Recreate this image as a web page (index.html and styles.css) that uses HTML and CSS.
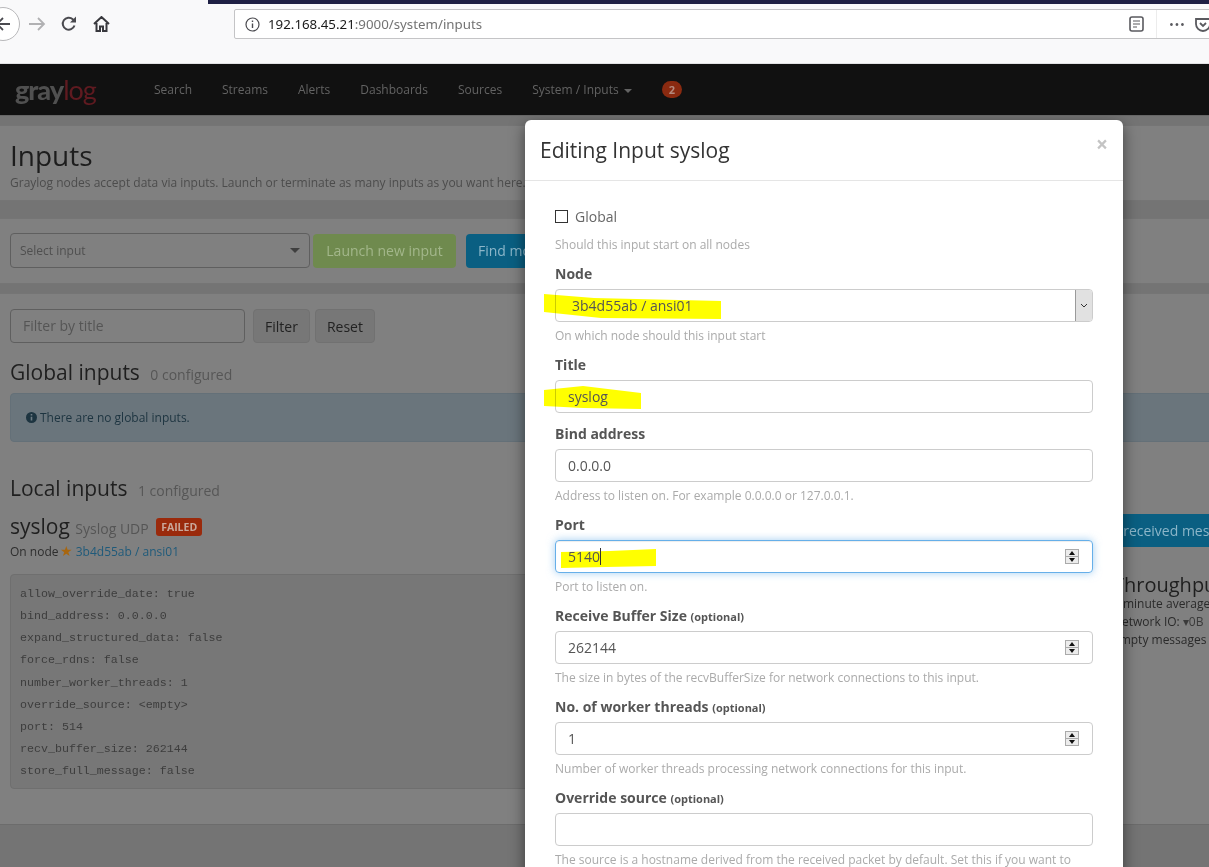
FILE: index.html
```html
<!DOCTYPE html>
<html lang="en">
<head>
    <meta charset="UTF-8">
    <meta name="viewport" content="width=device-width, initial-scale=1.0">
    <title>Inputs - Graylog</title>
    <link rel="stylesheet" href="styles.css">
</head>
<body>

    <!-- Browser toolbar -->
    <div class="browser-bar">
        <div class="tab-strip"></div>
        <div class="back-btn">
            <svg width="16" height="16" viewBox="0 0 16 16"><path d="M15 8H2M8 2L2 8l6 6" fill="none" stroke="#4a4a4f" stroke-width="1.8"/></svg>
        </div>
        <svg class="tool-icon forward" width="18" height="16" viewBox="0 0 18 16"><path d="M1 8h15M10 2l6 6-6 6" fill="none" stroke="#b1b1b3" stroke-width="1.8"/></svg>
        <svg class="tool-icon reload" width="16" height="16" viewBox="0 0 16 16"><path d="M13.5 9.5A6 6 0 1 1 11.8 3.2L14 5" fill="none" stroke="#4a4a4f" stroke-width="2"/><path d="M15 0.5V6.5H9z" fill="#4a4a4f"/></svg>
        <svg class="tool-icon home" width="17" height="16" viewBox="0 0 17 16"><path d="M1 8l7.5-7L16 8M3.500 7v8h3.500v-4.500h3V15h3.500V7" fill="none" stroke="#38383d" stroke-width="2"/></svg>
        <div class="url-box">
            <svg width="15" height="15" viewBox="0 0 15 15"><circle cx="7.500" cy="7.500" r="6.500" fill="none" stroke="#4a4a4f" stroke-width="1.200"/><path d="M7.500 6.500v4.500M7.500 3.500v1.500" stroke="#4a4a4f" stroke-width="1.400"/></svg>
            <span class="url-text"><span class="url-host">192.168.45.21</span>:9000/system/inputs</span>
            <svg class="reader" width="15" height="16" viewBox="0 0 15 16"><rect x="1" y="1" width="13" height="14" rx="2" fill="none" stroke="#5a5a5f" stroke-width="1.600"/><path d="M4 5h7M4 8h7M4 11h4" stroke="#5a5a5f" stroke-width="1.200"/></svg>
            <span class="url-divider"></span>
            <span class="dots">&bull;&bull;&bull;</span>
            <svg class="pocket" width="16" height="15" viewBox="0 0 16 15"><path d="M1 2h14v5a7 7 0 0 1-14 0z" fill="none" stroke="#5a5a5f" stroke-width="1.800"/><path d="M5 6l3 3 3-3" fill="none" stroke="#5a5a5f" stroke-width="1.800"/></svg>
        </div>
    </div>

    <!-- Graylog nav -->
    <div class="navbar">
        <span class="logo">gray<span class="logo-red">log</span></span>
        <a class="nav-link nav-search">Search</a>
        <a class="nav-link">Streams</a>
        <a class="nav-link">Alerts</a>
        <a class="nav-link">Dashboards</a>
        <a class="nav-link">Sources</a>
        <a class="nav-link">System / Inputs <span class="caret"></span></a>
        <span class="nav-badge">2</span>
    </div>

    <div class="page">
        <div class="panel panel-head">
            <h1>Inputs</h1>
            <p class="lead">Graylog nodes accept data via inputs. Launch or terminate as many inputs as you want here.</p>
        </div>

        <div class="panel panel-launch">
            <div class="select-input">Select input <span class="select-caret"></span></div>
            <button class="btn btn-green">Launch new input</button>
            <button class="btn btn-blue">Find more inputs</button>
        </div>

        <div class="panel panel-list">
            <div class="filter-row">
                <div class="filter-input">Filter by title</div>
                <button class="btn btn-grey">Filter</button>
                <button class="btn btn-grey">Reset</button>
            </div>

            <h2>Global inputs <small>0 configured</small></h2>
            <div class="alert">
                <svg width="11" height="11" viewBox="0 0 11 11"><circle cx="5.500" cy="5.500" r="5.500" fill="#1d3440"/><path d="M5.500 4.800v3.700M5.500 2v1.500" stroke="#6f7d85" stroke-width="1.600"/></svg>
                There are no global inputs.
            </div>

            <h2 class="local-title">Local inputs <small>1 configured</small></h2>
            <div class="input-row">
                <div class="input-main">
                    <h3>syslog <small>Syslog UDP</small> <span class="label-failed">FAILED</span></h3>
                    <div class="on-node">On node <span class="star">&#9733;</span> <a>3b4d55ab / ansi01</a></div>
                    <div class="config">
                        <div>allow_override_date: true</div>
                        <div>bind_address: 0.0.0.0</div>
                        <div>expand_structured_data: false</div>
                        <div>force_rdns: false</div>
                        <div>number_worker_threads: 1</div>
                        <div>override_source: &lt;empty&gt;</div>
                        <div>port: 514</div>
                        <div>recv_buffer_size: 262144</div>
                        <div>store_full_message: false</div>
                    </div>
                </div>
                <div class="input-side">
                    <button class="btn btn-blue btn-received">Show received messages</button>
                    <h4>Throughput</h4>
                    <div class="side-line">1 minute average rate</div>
                    <div class="side-line">Network IO: <span class="net">&#9662;0B</span></div>
                    <div class="side-line">Empty messages</div>
                </div>
            </div>
        </div>

        <div class="page-footer"></div>

        <!-- Edit modal -->
        <div class="modal">
            <div class="modal-header">
                <span class="modal-title">Editing Input syslog</span>
                <span class="modal-close">&times;</span>
            </div>
            <div class="modal-body">
                <div class="check-row"><span class="checkbox"></span> Global</div>
                <p class="help help-global">Should this input start on all nodes</p>

                <div class="field">
                    <div class="field-label">Node</div>
                    <div class="control">
                        <svg class="marker" style="left:-13px;top:3px" width="178" height="27" viewBox="0 0 178 27"><path d="M1 1l50 4 127 3v18l-120-1-57-6z" fill="#ffff00"/></svg>
                        <span class="select-value">3b4d55ab / ansi01</span>
                        <span class="select-arrow"><svg width="8" height="6" viewBox="0 0 8 6"><path d="M1 1l3 3 3-3" fill="none" stroke="#333" stroke-width="1"/></svg></span>
                    </div>
                    <p class="help">On which node should this input start</p>
                </div>

                <div class="field">
                    <div class="field-label">Title</div>
                    <div class="control">
                        <svg class="marker" style="left:-13px;top:5px" width="99" height="24" viewBox="0 0 99 24"><path d="M1 4L40 0l58 7v16L40 22 1 20z" fill="#ffff00"/></svg>
                        <span>syslog</span>
                    </div>
                </div>

                <div class="field">
                    <div class="field-label">Bind address</div>
                    <div class="control"><span>0.0.0.0</span></div>
                    <p class="help">Address to listen on. For example 0.0.0.0 or 127.0.0.1.</p>
                </div>

                <div class="field">
                    <div class="field-label">Port</div>
                    <div class="control control-focus">
                        <svg class="marker" style="left:4px;top:8px" width="97" height="19" viewBox="0 0 97 19"><path d="M1 3L50 2l46-2v17l-50 1-45 1z" fill="#ffff00"/></svg>
                        <span class="typed">5140</span>
                        <span class="spinner"><i class="up"></i><i class="down"></i></span>
                    </div>
                    <p class="help">Port to listen on.</p>
                </div>

                <div class="field">
                    <div class="field-label">Receive Buffer Size <small>(optional)</small></div>
                    <div class="control">
                        <span>262144</span>
                        <span class="spinner"><i class="up"></i><i class="down"></i></span>
                    </div>
                    <p class="help">The size in bytes of the recvBufferSize for network connections to this input.</p>
                </div>

                <div class="field">
                    <div class="field-label">No. of worker threads <small>(optional)</small></div>
                    <div class="control">
                        <span>1</span>
                        <span class="spinner"><i class="up"></i><i class="down"></i></span>
                    </div>
                    <p class="help">Number of worker threads processing network connections for this input.</p>
                </div>

                <div class="field">
                    <div class="field-label">Override source <small>(optional)</small></div>
                    <div class="control"></div>
                    <p class="help">The source is a hostname derived from the received packet by default. Set this if you want to</p>
                </div>
            </div>
        </div>
    </div>

</body>
</html>
```
FILE: styles.css
```css
html, body {
    height: 867px;
    overflow: hidden;
}

body {
    margin: 0;
    font-family: 'Open Sans', sans-serif;
    font-size: 13px;
    color: #222;
    background-color: #808080;
}

/* browser toolbar */
.browser-bar {
    position: relative;
    display: flex;
    align-items: flex-start;
    height: 63px;
    background-color: #f9f9fa;
    border-bottom: 1px solid #e2e2e4;
}

.tab-strip {
    position: absolute;
    left: 208px;
    right: 0;
    top: 0;
    height: 4px;
    background-color: #1f2044;
}

.back-btn {
    display: flex;
    align-items: center;
    justify-content: center;
    flex: none;
    width: 34px;
    height: 34px;
    margin: 7px 0 0 -14px;
    background-color: #fff;
    border: 1px solid #b8b8ba;
    border-radius: 50%;
    box-sizing: border-box;
}

.tool-icon {
    flex: none;
    margin-top: 16px;
}

.forward { margin-left: 8px; }
.reload { margin-left: 15px; }
.home { margin-left: 16px; }

.url-box {
    display: flex;
    align-items: center;
    flex: none;
    width: 1010px;
    height: 30px;
    margin: 9px 0 0 124px;
    padding-left: 10px;
    box-sizing: border-box;
    background-color: #fff;
    border: 1px solid #c4c4c6;
    border-radius: 2px;
}

.url-text {
    margin-left: 8px;
    font-family: 'Noto Sans', sans-serif;
    font-size: 13.300px;
    color: #737373;
}

.url-host {
    color: #1a1a1a;
}

.reader {
    margin-left: 647px;
    flex: none;
}

.url-divider {
    width: 1px;
    height: 28px;
    margin-left: 12px;
    background-color: #ececec;
}

.dots {
    margin-left: 12px;
    font-size: 13px;
    letter-spacing: 0.500px;
    color: #5a5a5f;
}

.pocket {
    margin-left: 10px;
    flex: none;
}

/* graylog nav */
.navbar {
    display: flex;
    align-items: center;
    height: 51px;
    background-color: #111;
}

.logo {
    width: 154px;
    padding-left: 15px;
    box-sizing: border-box;
    font-family: 'Lato', sans-serif;
    font-size: 27px;
    font-weight: 900;
    letter-spacing: -1px;
    color: #505050;
}

.logo-red {
    font-weight: 400;
    color: #5f1a20;
}

.nav-link {
    margin-right: 30px;
    font-size: 12px;
    color: #636363;
}

.caret {
    display: inline-block;
    margin-left: 2px;
    vertical-align: middle;
    border-top: 4px solid #636363;
    border-left: 4px solid transparent;
    border-right: 4px solid transparent;
}

.nav-badge {
    padding: 1px 7px;
    font-size: 11px;
    font-weight: 700;
    color: #b58a7e;
    background-color: #8a2a10;
    border-radius: 9px;
}

/* page behind the modal */
.page {
    position: relative;
    height: 752px;
    padding-top: 9px;
    box-sizing: border-box;
    overflow: hidden;
    background-color: #747474;
    border-top: 1px solid #666;
}

.panel {
    background-color: #808080;
    border-top: 1px solid #757575;
    border-bottom: 1px solid #757575;
    padding: 0 10px;
    box-sizing: border-box;
}

.panel-head {
    height: 76px;
    padding-top: 10px;
    margin-bottom: 17px;
}

h1 {
    margin: 0;
    font-size: 28px;
    font-weight: 400;
    line-height: 39px;
    color: #1d1d1d;
}

.lead {
    margin: 0;
    font-size: 12px;
    line-height: 16px;
    white-space: nowrap;
    color: #4c4c4c;
}

.panel-launch {
    display: flex;
    align-items: center;
    height: 66px;
    padding-bottom: 1px;
    margin-bottom: 9px;
}

.select-input {
    display: flex;
    align-items: center;
    justify-content: space-between;
    width: 300px;
    height: 35px;
    padding: 0 9px;
    box-sizing: border-box;
    font-size: 12px;
    color: #4f4f4f;
    border: 1px solid #5f5f5f;
    border-radius: 4px;
}

.select-caret {
    border-top: 5px solid #3f3f3f;
    border-left: 5px solid transparent;
    border-right: 5px solid transparent;
}

.btn {
    height: 34px;
    padding: 0 12px;
    font-family: 'Open Sans', sans-serif;
    font-size: 14px;
    border: 0;
    border-radius: 4px;
    white-space: nowrap;
}

.btn-green {
    width: 143px;
    margin-left: 3px;
    background-color: #6f8a4e;
    color: #a3b78b;
}

.btn-blue {
    margin-left: 10px;
    background-color: #0a5f82;
    color: #8cb6c9;
    flex: none;
}

.btn-grey {
    margin-left: 8px;
    padding: 0 11px;
    background-color: #777;
    color: #222;
    border: 1px solid #717171;
}

.btn-grey + .btn-grey {
    margin-left: 5px;
}

.panel-list {
    height: 532px;
    padding-top: 15px;
    border-bottom: 1px solid #6c6c6c;
}

.filter-row {
    display: flex;
    align-items: center;
}

.filter-input {
    width: 235px;
    height: 34px;
    padding-left: 12px;
    box-sizing: border-box;
    font-size: 14px;
    line-height: 32px;
    color: #555;
    border: 1px solid #5f5f5f;
    border-radius: 4px;
}

h2 {
    margin: 14px 0 3px;
    font-size: 21px;
    font-weight: 400;
    line-height: 31px;
    color: #1f1f1f;
}

h2 small {
    margin-left: 5px;
    font-size: 14px;
    color: #565656;
}

.alert {
    display: flex;
    align-items: center;
    gap: 3px;
    width: 1300px;
    height: 49px;
    padding-left: 15px;
    box-sizing: border-box;
    font-size: 12px;
    color: #1d3440;
    background-color: #6a757c;
    border: 1px solid #647078;
    border-radius: 4px;
}

.local-title {
    margin: 31px 0 0;
}

.input-row {
    display: flex;
    width: 1300px;
}

.input-main {
    flex: none;
    width: 1103px;
}

h3 {
    margin: 7px 0 0;
    font-size: 21px;
    font-weight: 400;
    line-height: 27px;
    color: #1f1f1f;
}

h3 small {
    font-size: 14px;
    color: #555;
}

.label-failed {
    display: inline-block;
    margin-left: 2px;
    padding: 0 5px;
    font-size: 10.500px;
    font-weight: 700;
    line-height: 18px;
    vertical-align: 3px;
    color: #c9a79a;
    background-color: #9a2a0c;
    border-radius: 3px;
}

.on-node {
    font-size: 12px;
    line-height: 20px;
    color: #2d2d2d;
}

.on-node a {
    color: #1f5a7a;
}

.star {
    margin-left: -2px;
    font-size: 14px;
    line-height: 14px;
    color: #a8660f;
}

.config {
    height: 215px;
    margin-top: 12px;
    padding: 8px 9px;
    box-sizing: border-box;
    font-family: 'Liberation Mono', monospace;
    font-size: 11.650px;
    line-height: 22.150px;
    color: #3d3d3d;
    background-color: #777;
    border: 1px solid #6f6f6f;
    border-radius: 4px;
}

.input-side {
    padding-top: 8px;
}

.btn-received {
    display: block;
    margin-left: -130px;
    width: 300px;
    height: 33px;
    text-align: left;
    padding-left: 101px;
}

h4 {
    margin: 28px 0 0;
    font-size: 20px;
    font-weight: 400;
    line-height: 20px;
    color: #1f1f1f;
}

.side-line {
    font-size: 12px;
    line-height: 18px;
    white-space: nowrap;
    color: #2a2a2a;
}

.net {
    color: #3a3a3a;
}

.page-footer {
    height: 42px;
}

/* modal */
.modal {
    position: absolute;
    left: 525px;
    top: 4px;
    width: 598px;
    height: 800px;
    background-color: #fff;
    border-radius: 6px;
    box-shadow: 0 5px 15px rgba(0, 0, 0, 0.5);
}

.modal-header {
    display: flex;
    align-items: center;
    justify-content: space-between;
    height: 61px;
    padding: 0 15px;
    box-sizing: border-box;
    border-bottom: 1px solid #e5e5e5;
}

.modal-title {
    font-size: 21px;
    color: #333;
}

.modal-close {
    margin: -12px 0 0;
    font-size: 21px;
    font-weight: 700;
    color: #c4c4c4;
}

.modal-body {
    padding: 24px 30px 0;
}

.check-row {
    display: flex;
    align-items: center;
    gap: 7px;
    height: 22px;
    font-size: 14px;
    color: #666;
}

.checkbox {
    width: 11px;
    height: 11px;
    border: 1px solid #333;
}

.help {
    margin: 5px 0 0;
    font-size: 12px;
    line-height: 17px;
    color: #aaa;
}

.help-global {
    margin: 9px 0 0;
    height: 28px;
}

.field {
    margin-bottom: 11px;
}

.field-label {
    height: 20px;
    margin-bottom: 5px;
    font-size: 14px;
    font-weight: 700;
    line-height: 20px;
    color: #555;
}

.field-label small {
    font-size: 11px;
}

.control {
    position: relative;
    display: flex;
    align-items: center;
    width: 538px;
    height: 33px;
    padding-left: 12px;
    box-sizing: border-box;
    font-size: 14px;
    color: #555;
    border: 1px solid #ccc;
    border-radius: 4px;
}

.control span {
    position: relative;
}

.control-focus {
    border-color: #66afe9;
    box-shadow: inset 0 1px 1px rgba(0, 0, 0, 0.075), 0 0 8px rgba(102, 175, 233, 0.6);
}

.marker {
    position: absolute;
    mix-blend-mode: multiply;
}

.select-value {
    margin-left: 4px;
}

.control .select-arrow {
    position: absolute;
    right: 0;
    top: 0;
    display: flex;
    align-items: center;
    justify-content: center;
    width: 16px;
    height: 31px;
    background-color: #e1e1e1;
    border-left: 1px solid #9a9a9a;
    border-radius: 0 3px 3px 0;
}

.typed {
    border-right: 1px solid #333;
    line-height: 17px;
}

.control .spinner {
    position: absolute;
    right: 13px;
    top: 8px;
    display: flex;
    flex-direction: column;
    gap: 1px;
    width: 14px;
    height: 15px;
    box-sizing: border-box;
    background-color: #aaa;
    border: 1px solid #aaa;
}

.spinner i {
    display: flex;
    align-items: center;
    justify-content: center;
    flex: 1;
    background-color: #ececec;
}

.spinner i::after {
    content: "";
    border-left: 3px solid transparent;
    border-right: 3px solid transparent;
}

.spinner .up::after {
    border-bottom: 4px solid #111;
}

.spinner .down::after {
    border-top: 4px solid #111;
}
```
